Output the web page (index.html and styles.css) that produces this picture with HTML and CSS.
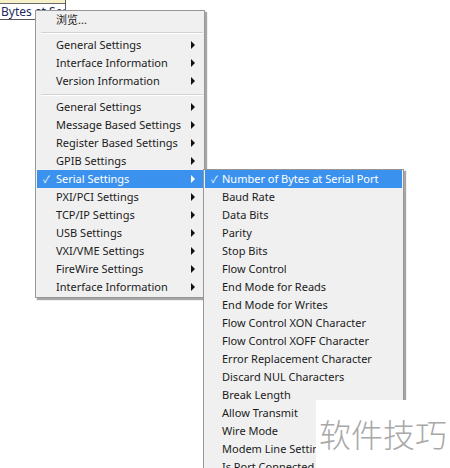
FILE: index.html
```html
<!doctype html>
<html>

<head>
    <meta charset="UTF-8">
    <title>Serial Settings</title>
    <link rel="stylesheet" href="styles.css">
</head>

<body>
    <div class="field">
        <div class="field-top"></div>
        <div class="field-text">Bytes at Serial Port</div>
    </div>

    <ul class="menu menu-main">
        <li class="cn">浏览...</li>
        <li class="sep"></li>
        <li class="sub">General Settings</li>
        <li class="sub">Interface Information</li>
        <li class="sub">Version Information</li>
        <li class="sep sep2"></li>
        <li class="sub">General Settings</li>
        <li class="sub">Message Based Settings</li>
        <li class="sub">Register Based Settings</li>
        <li class="sub">GPIB Settings</li>
        <li class="sub active checked">Serial Settings</li>
        <li class="sub">PXI/PCI Settings</li>
        <li class="sub">TCP/IP Settings</li>
        <li class="sub">USB Settings</li>
        <li class="sub">VXI/VME Settings</li>
        <li class="sub">FireWire Settings</li>
        <li class="sub">Interface Information</li>
    </ul>

    <ul class="menu menu-serial">
        <li class="active checked">Number of Bytes at Serial Port</li>
        <li>Baud Rate</li>
        <li>Data Bits</li>
        <li>Parity</li>
        <li>Stop Bits</li>
        <li>Flow Control</li>
        <li>End Mode for Reads</li>
        <li>End Mode for Writes</li>
        <li>Flow Control XON Character</li>
        <li>Flow Control XOFF Character</li>
        <li>Error Replacement Character</li>
        <li>Discard NUL Characters</li>
        <li>Break Length</li>
        <li>Allow Transmit</li>
        <li>Wire Mode</li>
        <li>Modem Line Settings</li>
        <li>Is Port Connected</li>
    </ul>

    <div class="mark">软件技巧</div>
</body>

</html>
```

FILE: styles.css
```css
* {
    margin: 0;
    padding: 0;
}

html,
body {
    width: 100%;
    height: 100%;
    overflow: hidden;
    background: #fff;
}

body {
    position: relative;
    font: 11px/18px "Noto Sans", "Noto Sans CJK SC", sans-serif;
    color: #1b1b1b;
}

/* the control peeking out behind the menus */
.field {
    position: absolute;
    left: -1px;
    top: -3px;
    width: 65px;
    height: 21px;
    border: 1px solid #5a5a5a;
    background: #fff;
    overflow: hidden;
}

.field-top {
    height: 5px;
    background: #f6f1c8;
    border-bottom: 1px solid #6b6b6b;
}

.field-text {
    padding-left: 1px;
    font-size: 12px;
    line-height: 15px;
    color: #1d2c5a;
    white-space: nowrap;
}

/* popup menus */
.menu {
    position: absolute;
    list-style: none;
    background: #f0f0f0;
    border: 1px solid #979797;
    padding: 0 1px 1px;
    box-shadow: 2px 2px 1px rgba(0, 0, 0, 0.35);
}

.menu-main {
    left: 35px;
    top: 10px;
    width: 166px;
}

.menu-serial {
    left: 203px;
    top: 169px;
    width: 197px;
    height: 320px;
}

.menu li {
    position: relative;
    height: 18px;
    padding-left: 19px;
    white-space: nowrap;
}

.menu-serial li {
    padding-left: 17px;
}

.menu li.cn {
    font-size: 11px;
}

.menu li.sep {
    height: 4px;
    padding: 3px 0 0;
}

.menu li.sep2 {
    height: 4px;
    padding-top: 4px;
}

.menu li.sep::after {
    content: "";
    display: block;
    margin-left: 4px;
    height: 1px;
    background: #d2d2d2;
    border-bottom: 1px solid #fff;
}

.menu li.sub::after {
    content: "";
    position: absolute;
    right: 8px;
    top: 5px;
    border-left: 4px solid #111;
    border-top: 4px solid transparent;
    border-bottom: 4px solid transparent;
}

.menu li.active {
    background: #3b92ee;
    color: #fff;
}

.menu li.active::after {
    border-left-color: #fff;
}

.menu li.checked::before {
    content: "\2713";
    position: absolute;
    left: 6px;
    top: 0;
    font-size: 10px;
}

/* watermark */
.mark {
    position: absolute;
    left: 316px;
    top: 400px;
    width: 134px;
    height: 68px;
    background: #fff;
    font: 300 32px/66px "Noto Sans CJK SC", sans-serif;
    color: #a8a8a8;
    text-align: center;
}
```
